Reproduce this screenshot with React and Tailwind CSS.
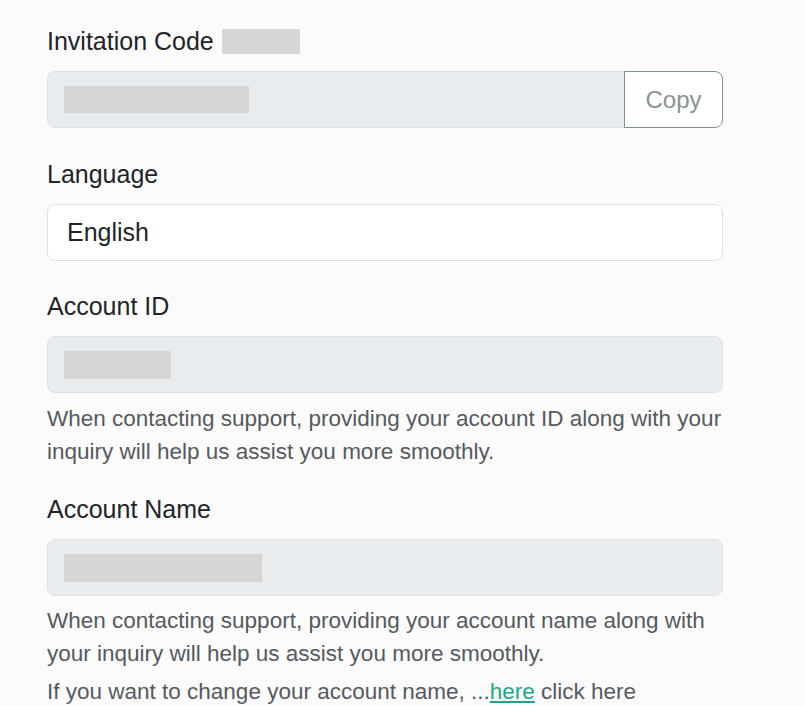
import React from 'react';

// Blurred value placeholder
function Redacted({ w, h = 'h-[28px]' }) {
  return <div className={`${h} bg-[#d6d6d6] ${w}`} />;
}

function Field({ label, children, help }) {
  return (
    <div>
      <div className="text-[25px] leading-[30px] text-[#212529] mb-[15px]">{label}</div>
      {children}
      {help}
    </div>
  );
}

export default function App() {
  return (
    <main className="min-h-screen bg-[#fbfbfb] font-['Liberation_Sans',Arial,sans-serif] pt-[26px] pl-[47px] pr-[60px]">
      {/* Invitation code */}
      <div className="flex items-center gap-[8px] mb-[15px]">
        <span className="text-[25px] leading-[30px] text-[#212529]">Invitation Code</span>
        <div className="w-[78px] h-[25px] bg-[#d6d6d6]" />
      </div>
      <div className="flex h-[57px] w-[676px]">
        <div className="flex-1 flex items-center pl-[16px] bg-[#e9ecef] border border-r-0 border-[#dee2e6] rounded-l-[8px]">
          <Redacted w="w-[185px]" h="h-[27px]" />
        </div>
        <button className="w-[99px] bg-white border border-[#7f8d8d] rounded-r-[8px] text-[24px] text-[#849595]">
          Copy
        </button>
      </div>

      {/* Language */}
      <div className="mt-[31px]">
        <Field label="Language">
          <div className="h-[57px] w-[676px] flex items-center pl-[19px] bg-white border border-[#dee2e6] rounded-[8px] text-[25px] text-[#212529]">
            English
          </div>
        </Field>
      </div>

      {/* Account ID */}
      <div className="mt-[30px]">
        <Field
          label="Account ID"
          help={
            <p className="mt-[9px] w-[690px] text-[22.5px] leading-[33px] text-[#555a5e]">
              When contacting support, providing your account ID along with your inquiry will help us assist you more smoothly.
            </p>
          }
        >
          <div className="h-[57px] w-[676px] flex items-center pl-[16px] bg-[#e9ecef] border border-[#dee2e6] rounded-[8px]">
            <Redacted w="w-[107px]" />
          </div>
        </Field>
      </div>

      {/* Account Name */}
      <div className="mt-[26px]">
        <Field
          label="Account Name"
          help={
            <div className="mt-[8px] w-[690px] text-[22.5px] leading-[33px] text-[#555a5e]">
              <p>When contacting support, providing your account name along with your inquiry will help us assist you more smoothly.</p>
              <p className="mt-[5px]">
                If you want to change your account name, ...
                <a href="#" className="text-[#1aa784] underline">here</a> click here
              </p>
            </div>
          }
        >
          <div className="h-[57px] w-[676px] flex items-center pl-[16px] bg-[#e9ecef] border border-[#dee2e6] rounded-[8px]">
            <Redacted w="w-[198px]" />
          </div>
        </Field>
      </div>
    </main>
  );
}
